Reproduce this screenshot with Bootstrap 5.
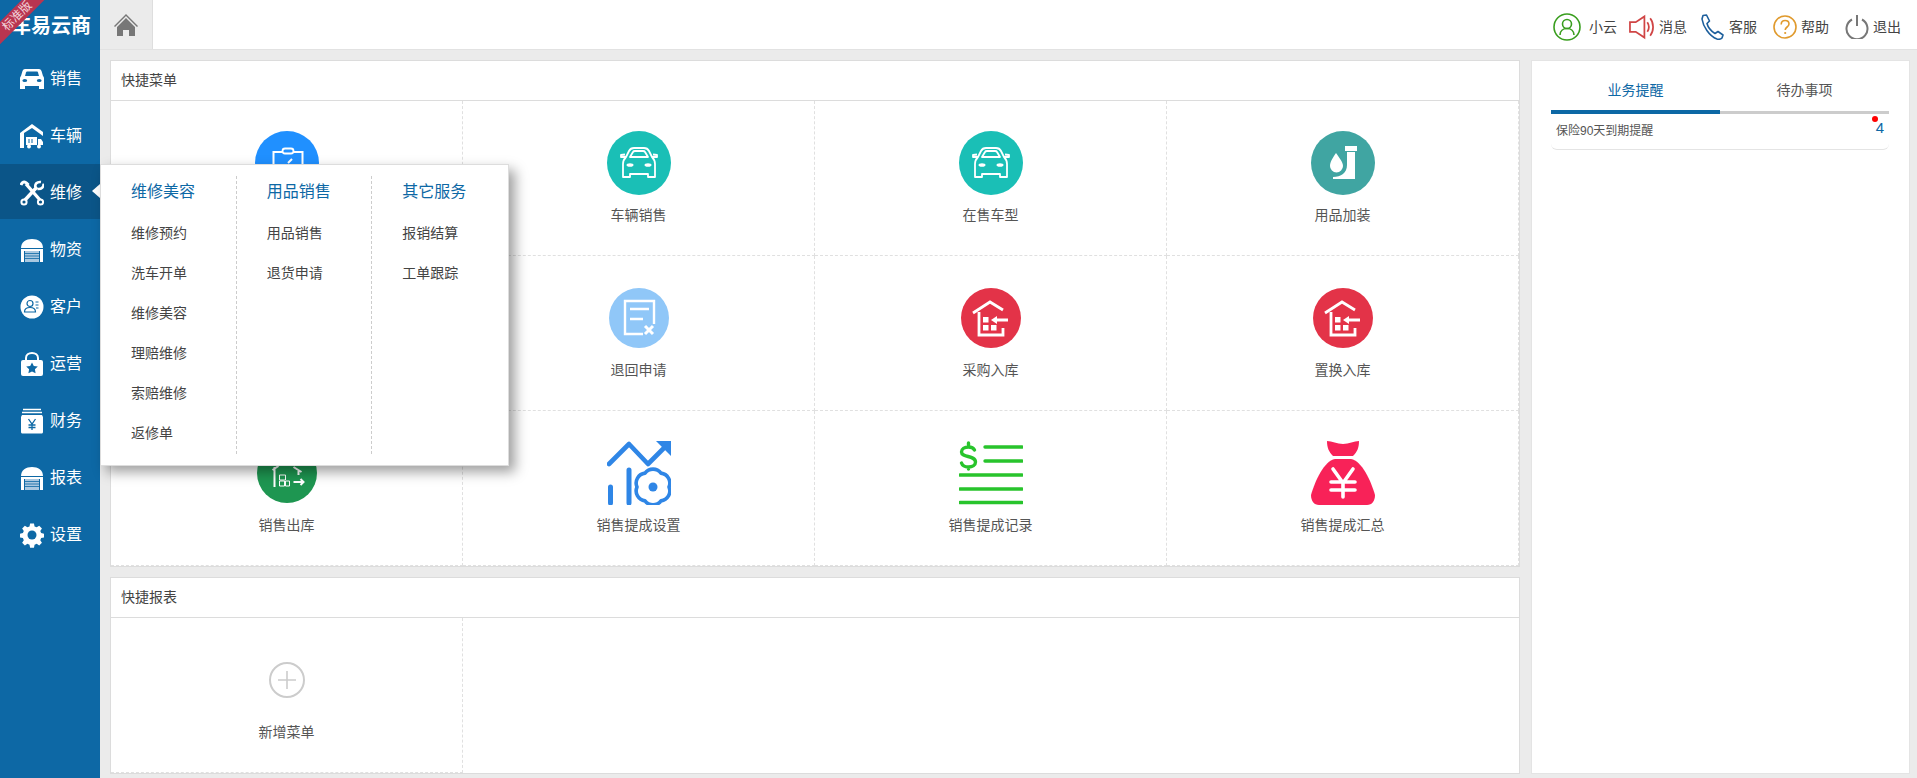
<!DOCTYPE html>
<html lang="zh-CN">
<head>
    <meta charset="UTF-8">
    <meta name="viewport" content="width=device-width, initial-scale=1.0">
    <title>车易云商</title>
    <link rel="stylesheet" href="https://cdn.jsdelivr.net/npm/bootstrap@5.3.0/dist/css/bootstrap.min.css">
    <style>
        body {
            background-color: #ebebeb;
            font-family: "Liberation Sans", "Noto Sans CJK SC", sans-serif;
            font-size: 14px;
            color: #555;
            overflow: hidden;
        }
        .app-wrap { height: 778px; }
        .side-bar {
            width: 100px;
            flex: 0 0 100px;
            background-color: #0d68a5;
            color: #fff;
        }
        .logo-box {
            height: 50px;
            font-size: 20px;
            font-weight: 700;
            padding: 2px 0 0 11px;
            white-space: nowrap;
        }
        .ribbon-box {
            top: 0;
            left: 0;
            width: 50px;
            height: 50px;
            overflow: hidden;
        }
        .ribbon-text {
            top: 8px;
            left: -28px;
            width: 90px;
            height: 16px;
            line-height: 16px;
            font-size: 12px;
            font-weight: 400;
            text-align: center;
            color: #f3d5dc;
            background-color: #b93550;
            transform: rotate(-45deg);
        }
        .side-item {
            height: 55px;
            margin-bottom: 2px;
            padding: 2px 0 0 20px;
            font-size: 16px;
            color: #fff;
            text-decoration: none;
            gap: 6px;
        }
        .side-item svg { width: 24px; height: 26px; flex: none; }
        .side-item.is-on { background-color: #0b5588; }
        .side-item.is-on::after {
            content: "";
            position: absolute;
            right: 0;
            top: 20px;
            border-top: 7px solid transparent;
            border-bottom: 7px solid transparent;
            border-right: 8px solid #fff;
        }
        .top-bar {
            height: 50px;
            background-color: #fff;
            border-bottom: 1px solid #e2e2e2;
            color: #444;
        }
        .home-tab {
            width: 53px;
            height: 49px;
            background-color: #ebebeb;
            border-right: 1px solid #dedede;
        }
        .top-link { color: #444; text-decoration: none; }
        .top-tools { padding-right: 16px; padding-top: 5px; }
        .tool-gap { margin-left: 14px; }
        .page-body {
            padding: 10px 7px 0 10px;
            gap: 11px;
        }
        .left-col { width: 1410px; flex: none; gap: 10px; }
        .right-col { width: 379px; flex: none; height: 714px; padding: 0 20px 0 19px; border: 1px solid #e4e4e4; background: #fff; }
        .panel-box { border: 1px solid #dcdcdc; background: #fff; border-radius: 0; }
        .panel-box .card-header {
            height: 40px;
            line-height: 39px;
            padding: 0 0 0 10px;
            background: #fff;
            border-bottom: 1px solid #dcdcdc;
            border-radius: 0;
            color: #444;
        }
        .menu-cell {
            height: 155px;
            padding-top: 30px;
            border-right: 1px dashed #e0e0e0;
            border-bottom: 1px dashed #e0e0e0;
            text-align: center;
        }
        .menu-cell svg { width: 64px; height: 64px; display: block; margin: 0 auto 10px; }
        .menu-cell span { display: block; line-height: 20px; color: #555; }
        .fly-menu {
            left: 100px;
            top: 164px;
            width: 409px;
            height: 302px;
            padding: 11px 0;
            background: #fff;
            border: 1px solid #ddd;
            box-shadow: 6px 6px 12px rgba(0, 0, 0, .38);
            z-index: 20;
        }
        .fly-col { width: 136px; padding-left: 30px; border-right: 1px dashed #ccc; }
        .fly-col:last-child { border-right: 0; }
        .fly-title { height: 37px; line-height: 32px; font-size: 16px; color: #0d68a5; }
        .fly-link { height: 40px; line-height: 40px; color: #444; }
        .tab-head { flex: 1; text-align: center; padding: 20px 0 11px; line-height: 19px; border-bottom: 3px solid #ccc; color: #555; }
        .tab-head.is-on { color: #0d68a5; padding-bottom: 10px; border-bottom: 4px solid #0d68a5; }
        .notice-row {
            height: 36px;
            padding: 7px 5px 0 5px;
            font-size: 12px;
            line-height: 20px;
            border: 0;
            border-bottom: 1px solid #e4e4e4;
            border-radius: 0;
            color: #555;
        }
        .notice-num { font-size: 15px; color: #0d68a5; line-height: 16px; margin-top: -1px; }
        .notice-dot {
            left: -4px;
            top: -4px;
            width: 6px;
            height: 6px;
            border-radius: 50%;
            background: #f00;
        }
    </style>
</head>
<body>
<svg width="0" height="0" class="d-none">
    <symbol id="carLine" viewBox="0 0 64 64">
        <circle cx="32" cy="32" r="32" fill="#1abfb6"/>
        <g fill="none" stroke="#fff" stroke-width="1.800" stroke-linejoin="round">
            <path d="M16 46V33c0-3 1-5 3-7l3-6c1-2 3-3 5-3h10c2 0 4 1 5 3l3 6c2 2 3 4 3 7v13h-7v-3H23v3z"/>
            <path d="M23 26l3-5c.5-1 1-1 2-1h8c1 0 1.500 0 2 1l3 5z"/>
            <path d="M19 26h-5v-2l4-.5M45 26h5v-2l-4-.5"/>
        </g>
        <ellipse cx="23" cy="34" rx="3.500" ry="1.800" fill="#fff"/>
        <ellipse cx="41" cy="34" rx="3.500" ry="1.800" fill="#fff"/>
    </symbol>
    <symbol id="houseIn" viewBox="0 0 64 64">
        <circle cx="32" cy="32" r="30" fill="#e33348"/>
        <g transform="translate(2 2)">
            <path d="M12 25L29 14l13 8M18 24v23h24v-7M47 32H33" fill="none" stroke="#fff" stroke-width="2.800"/>
            <path d="M30 32l6-4v8z" fill="#fff"/>
            <path d="M22 29h5.500v5.500H22zM30 37h5.500v5.500H30zM22 37h5.500v5.500H22z" fill="#fff"/>
        </g>
    </symbol>
    <symbol id="storeDoor" viewBox="0 0 24 26">
        <path d="M1 11C1 5 6 2 12 2s11 3 11 9z" fill="#fff"/>
        <path d="M1 12h22v13h-3V14H4v11H1z" fill="#fff"/>
        <path d="M5 14h14v11H5z" fill="#a9c8e0"/>
        <path d="M5 16.500h14M5 19h14M5 21.500h14" stroke="#0d68a5" stroke-width=".8"/>
    </symbol>
</svg>

<div class="app-wrap d-flex position-relative">
    <aside class="side-bar">
        <div class="logo-box position-relative d-flex align-items-center">车易云商</div>
        <nav class="d-flex flex-column">
            <a class="side-item position-relative d-flex align-items-center" href="#">
                <svg viewBox="0 0 24 24"><path d="M5 2h14c1.200 0 2 .8 2.500 2L23 9c1 1 1 2 1 3v10h-5v-3H5v3H0V12c0-1 0-2 1-3l1.500-5C3 2.800 3.800 2 5 2z" fill="#fff"/><path d="M5 9l1-3.500c.2-.6.5-1 1.200-1h9.600c.7 0 1 .4 1.200 1L19 9z" fill="#0d68a5"/><ellipse cx="4.800" cy="13.500" rx="2.400" ry="1.600" fill="#0d68a5"/><ellipse cx="19.200" cy="13.500" rx="2.400" ry="1.600" fill="#0d68a5"/></svg>
                销售
            </a>
            <a class="side-item position-relative d-flex align-items-center" href="#">
                <svg viewBox="0 0 24 26"><path d="M0 10L12 1l11 8v4L12 5 4 10v15H0z" fill="#fff"/><path d="M6 14h11v8H6zM18 16h3l2 3v3h-5z" fill="#fff"/><circle cx="9" cy="23.500" r="2" fill="#fff"/><circle cx="19" cy="23.500" r="2" fill="#fff"/><path d="M9 16v4M12 16v4" stroke="#0d68a5"/></svg>
                车辆
            </a>
            <a class="side-item is-on position-relative d-flex align-items-center" href="#">
                <svg viewBox="0 0 24 26"><g stroke="#fff" fill="none"><path d="M6 4l14 16" stroke-width="3.400"/><path d="M17 7L5 20" stroke-width="3.400"/><circle cx="4" cy="22" r="2.600" stroke-width="2"/><circle cx="20.500" cy="22" r="2.600" stroke-width="2"/><path d="M23.500 3.500c.5 3.500-2 6-6 5.500M15.500 7.500c-1-3.500 1.500-6 5.500-5.500" stroke-width="2.600"/><path d="M1 5c1-3 3.500-4 5.500-2l2 2" stroke-width="3"/></g></svg>
                维修
            </a>
            <a class="side-item position-relative d-flex align-items-center" href="#">
                <svg><use href="#storeDoor"/></svg>
                物资
            </a>
            <a class="side-item position-relative d-flex align-items-center" href="#">
                <svg viewBox="0 0 24 24"><circle cx="12" cy="12" r="11.500" fill="#fff"/><circle cx="10" cy="8.500" r="3" fill="none" stroke="#0d68a5" stroke-width="1.200"/><path d="M4.500 17c0-3 2-4.500 5.500-4.500s5.500 1.500 5.500 4.500z" fill="none" stroke="#0d68a5" stroke-width="1.200"/><path d="M15.500 7h3M15.500 10h3M16 13h2.500" stroke="#0d68a5"/></svg>
                客户
            </a>
            <a class="side-item position-relative d-flex align-items-center" href="#">
                <svg viewBox="0 0 24 26"><path d="M6 10V7c0-3 2.500-5 6-5s6 2 6 5v3" fill="none" stroke="#fff" stroke-width="2"/><rect x="1" y="9" width="22" height="16" rx="2" fill="#fff"/><path d="M12 11.500l1.800 3.600 4 .5-2.900 2.700.7 4-3.600-1.900-3.600 1.900.7-4-2.900-2.700 4-.5z" fill="#0d68a5"/></svg>
                运营
            </a>
            <a class="side-item position-relative d-flex align-items-center" href="#">
                <svg viewBox="0 0 24 26"><path d="M3 1.500h18M2 4.500h20" stroke="#fff" stroke-width="1.500"/><path d="M2 7h20l1 2v15c0 1-1 1.500-1.500 1.500h-19C2 25.500 1 25 1 24V9z" fill="#fff"/><path d="M8.500 11l3.500 5 3.500-5M8.500 17h7M8.500 19.500h7M12 16v6" stroke="#0d68a5" stroke-width="1.300" fill="none"/></svg>
                财务
            </a>
            <a class="side-item position-relative d-flex align-items-center" href="#">
                <svg><use href="#storeDoor"/></svg>
                报表
            </a>
            <a class="side-item position-relative d-flex align-items-center" href="#">
                <svg viewBox="0 0 24 24"><path d="M10 1h4l.6 3 2.200.9 2.600-1.700 2.800 2.800-1.700 2.600.9 2.200 3 .6v4l-3 .6-.9 2.200 1.700 2.600-2.800 2.800-2.600-1.700-2.200.9-.6 3h-4l-.6-3-2.200-.9-2.600 1.700-2.800-2.800 1.700-2.600-.9-2.200-3-.6v-4l3-.6.9-2.200L1.800 6l2.800-2.800 2.600 1.700L9.400 4z" fill="#fff" transform="translate(.4 -.4) scale(.97)"/><circle cx="12" cy="12" r="4.500" fill="#0d68a5"/></svg>
                设置
            </a>
        </nav>
    </aside>

    <div class="ribbon-box position-absolute">
        <div class="ribbon-text position-absolute">标准版</div>
    </div>

    <div class="flex-grow-1 d-flex flex-column">
        <header class="top-bar d-flex justify-content-between">
            <div class="home-tab d-flex align-items-center justify-content-center">
                <svg width="24" height="24" viewBox="0 0 24 24"><path d="M12 1L0 13l1 1L12 3l11 11 1-1z" fill="#777"/><path d="M12 5L3 14v9h6v-6h6v6h6v-9z" fill="#777"/></svg>
            </div>
            <div class="top-tools d-flex align-items-center">
                <a class="top-link d-flex align-items-center" href="#">
                    <svg class="me-2" width="28" height="28" viewBox="0 0 28 28"><circle cx="14" cy="14" r="13" fill="none" stroke="#3a9e1f" stroke-width="1.600"/><circle cx="14" cy="11" r="4.500" fill="none" stroke="#3a9e1f" stroke-width="1.600"/><path d="M7 22c0-4 3-6.500 7-6.500s7 2.500 7 6.500" fill="none" stroke="#3a9e1f" stroke-width="1.600"/></svg>
                    小云
                </a>
                <a class="top-link d-flex align-items-center ms-2" href="#">
                    <svg class="ms-1 me-1" width="26" height="26" viewBox="0 0 27 26"><path d="M1 8h6l9-6v22l-9-6H1z" fill="none" stroke="#d04545" stroke-width="1.800"/><path d="M19 8c2 3 2 7 0 10M22 4c4 5 4 13 0 18" fill="none" stroke="#d04545" stroke-width="1.800"/></svg>
                    消息
                </a>
                <a class="top-link tool-gap d-flex align-items-center" href="#">
                    <svg class="me-1" width="24" height="26" viewBox="0 0 24 26"><path d="M2 1.500l3.500-.5 3 6-2.500 2.500c1 4 4 7.500 8 10l3-2 5 3.500-1 3c-1 1-3 1.500-5 1C8 22 2 12 1 5z" fill="none" stroke="#1d5f9c" stroke-width="1.600" stroke-linejoin="round"/></svg>
                    客服
                </a>
                <a class="top-link d-flex align-items-center ms-3" href="#">
                    <svg class="me-1" width="24" height="24" viewBox="0 0 24 24"><circle cx="12" cy="12" r="11" fill="none" stroke="#e09a2d" stroke-width="1.600"/><path d="M8.200 9.500c0-2.500 1.700-4 3.900-4s3.900 1.400 3.900 3.500c0 3-3.800 3-3.800 6" fill="none" stroke="#e09a2d" stroke-width="1.600"/><circle cx="12.200" cy="18" r="1.100" fill="#e09a2d"/></svg>
                    帮助
                </a>
                <a class="top-link d-flex align-items-center ms-3" href="#">
                    <svg width="24" height="24" viewBox="0 0 24 24"><path d="M7 4.500a10.500 10.500 0 1 0 10 0" fill="none" stroke="#777" stroke-width="2"/><path d="M12 0v11" stroke="#777" stroke-width="2"/></svg>
                    <span class="ms-1">退出</span>
                </a>
            </div>
        </header>

        <main class="page-body d-flex">
            <div class="left-col d-flex flex-column">
                <section class="card panel-box">
                    <div class="card-header">快捷菜单</div>
                    <div class="row g-0">
                        <div class="col-3 menu-cell">
                            <svg viewBox="0 0 64 64"><circle cx="32" cy="32" r="32" fill="#2090ff"/><path d="M27 21h-8.500v29h29V21H38" fill="none" stroke="#fff" stroke-width="2"/><rect x="27.500" y="17.500" width="11" height="5" rx="2.500" fill="none" stroke="#fff" stroke-width="1.800"/><path d="M37 28l-4 4" stroke="#fff" stroke-width="2"/></svg>
                        </div>
                        <div class="col-3 menu-cell">
                            <svg><use href="#carLine"/></svg>
                            <span>车辆销售</span>
                        </div>
                        <div class="col-3 menu-cell">
                            <svg><use href="#carLine"/></svg>
                            <span>在售车型</span>
                        </div>
                        <div class="col-3 menu-cell">
                            <svg viewBox="0 0 64 64"><circle cx="32" cy="32" r="32" fill="#40a5a2"/><path d="M34 15h12v5H34z" fill="#fff"/><path d="M36 21h8v27H22v-2c8 0 14-4 14-12z" fill="#fff"/><path d="M25 22c-4 6-6 9-6 13a6.500 6.500 0 0 0 13 0c0-4-3-7-7-13z" fill="#fff"/></svg>
                            <span>用品加装</span>
                        </div>

                        <div class="col-3 menu-cell"></div>
                        <div class="col-3 menu-cell">
                            <svg viewBox="0 0 64 64"><circle cx="32" cy="32" r="30" fill="#90c7f8"/><g transform="translate(2 2)" fill="none" stroke="#fff"><path d="M45 36V13H16v33h18" stroke-width="2.400"/><path d="M21 21h19M21 31h13" stroke-width="2.400"/><path d="M36 38l8 8M44 38l-8 8" stroke-width="3"/></g></svg>
                            <span>退回申请</span>
                        </div>
                        <div class="col-3 menu-cell">
                            <svg><use href="#houseIn"/></svg>
                            <span>采购入库</span>
                        </div>
                        <div class="col-3 menu-cell">
                            <svg><use href="#houseIn"/></svg>
                            <span>置换入库</span>
                        </div>

                        <div class="col-3 menu-cell">
                            <svg viewBox="0 0 64 64"><circle cx="32" cy="32" r="30" fill="#1e9651"/><g fill="none" stroke="#fff" stroke-width="2"><path d="M17.500 29l6-4M38.500 26l8 5M43.500 30v4M19.500 26v20"/><path d="M38.500 41h10M45.500 38l3 3-3 3"/></g><path d="M24.500 34h6v5h-6zM24.500 40h5v5h-5zM30.500 40h4v5h-4z" fill="none" stroke="#fff"/></svg>
                            <span>销售出库</span>
                        </div>
                        <div class="col-3 menu-cell">
                            <svg viewBox="0 0 64 64"><g fill="none" stroke="#2f86e6" stroke-linecap="round" stroke-linejoin="round"><path d="M2 23L22 3l19 20 19-19" stroke-width="4.600"/><path d="M3.500 46v16M22 29v33" stroke-width="5"/><path d="M38 32.100a10 10 0 0 1 16 0 10 10 0 0 1 8 13.900 10 10 0 0 1-8 13.900 10 10 0 0 1-16 0A10 10 0 0 1 30 46a10 10 0 0 1 8-13.900z" stroke-width="3.600"/></g><path d="M49 0h15v15z" fill="#2f86e6"/><circle cx="46" cy="46" r="4.500" fill="#2f86e6"/></svg>
                            <span>销售提成设置</span>
                        </div>
                        <div class="col-3 menu-cell">
                            <svg viewBox="0 0 64 64"><g fill="none" stroke="#28c42c" stroke-width="3.400" stroke-linecap="round"><path d="M26 6h37M26 20h37M1 34h62M1 48h62M1 61.500h62"/><path d="M15.500 9c-1-2-3-3-6-3-4 0-7 2-7 5 0 6 14 3 14 10 0 3-3 5-7 5-3 0-6-1-7-4M9.500 2v3M9.500 26v2"/></g></svg>
                            <span>销售提成记录</span>
                        </div>
                        <div class="col-3 menu-cell">
                            <svg viewBox="0 0 64 64"><path d="M16 0c5 0 10 3 16 3s11-3 16-3c0 7-2 11-6 15H22c-4-4-6-8-6-15z" fill="#f82258"/><path d="M24 18h16c11 2 20 22 24 36 0 6-3 10-8 10H8c-5 0-8-4-8-10 4-14 13-34 24-36z" fill="#f82258"/><path d="M22 28l10 14 10-14M20 41h24M20 49h24M32 41v15" fill="none" stroke="#fff" stroke-width="3.600" stroke-linecap="round"/></svg>
                            <span>销售提成汇总</span>
                        </div>
                    </div>
                </section>

                <section class="card panel-box">
                    <div class="card-header">快捷报表</div>
                    <div class="row g-0">
                        <div class="col-3 menu-cell">
                            <svg viewBox="0 0 64 64"><circle cx="32" cy="32" r="17" fill="none" stroke="#ccc" stroke-width="2"/><path d="M32 23v18M23 32h18" stroke="#ccc" stroke-width="1.600"/></svg>
                            <span>新增菜单</span>
                        </div>
                    </div>
                </section>
            </div>

            <section class="right-col">
                <div class="d-flex">
                    <div class="tab-head is-on">业务提醒</div>
                    <div class="tab-head">待办事项</div>
                </div>
                <ul class="list-group">
                    <li class="list-group-item notice-row d-flex justify-content-between">
                        <span>保险90天到期提醒</span>
                        <span class="notice-num position-relative">4<i class="notice-dot position-absolute"></i></span>
                    </li>
                </ul>
            </section>
        </main>
    </div>

    <div class="fly-menu position-absolute d-flex">
        <div class="fly-col">
            <div class="fly-title">维修美容</div>
            <div class="fly-link">维修预约</div>
            <div class="fly-link">洗车开单</div>
            <div class="fly-link">维修美容</div>
            <div class="fly-link">理赔维修</div>
            <div class="fly-link">索赔维修</div>
            <div class="fly-link">返修单</div>
        </div>
        <div class="fly-col">
            <div class="fly-title">用品销售</div>
            <div class="fly-link">用品销售</div>
            <div class="fly-link">退货申请</div>
        </div>
        <div class="fly-col">
            <div class="fly-title">其它服务</div>
            <div class="fly-link">报销结算</div>
            <div class="fly-link">工单跟踪</div>
        </div>
    </div>
</div>
</body>
</html>
